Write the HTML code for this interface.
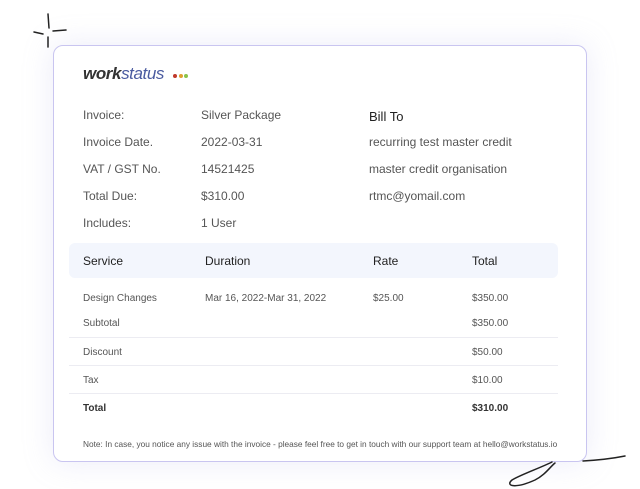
<!DOCTYPE html>
<html><head><style>
body{margin:0;width:640px;height:489px;background:#fff;position:relative;overflow:hidden;font-family:"Liberation Sans",sans-serif;}
.a{position:absolute;white-space:nowrap;}
.card{position:absolute;left:53px;top:45px;width:532px;height:415px;border:1.5px solid #c9c5f0;border-radius:10px;background:#fff;box-shadow:0 0 30px rgba(180,180,230,0.25);}
.l{font-size:12px;color:#555;}
.s{font-size:10px;color:#555;}
.ln{position:absolute;left:69px;width:489px;height:1px;background:#ececf2;}
.d{display:inline-block;width:4px;height:4px;border-radius:2px;margin-right:1.5px;vertical-align:top}
</style></head><body>
<div class="card"></div>
<svg class="a" style="left:0;top:0" width="640" height="489">
<path d="M48 14 L49 28 M34 32 L43 34 M53 31 L66 30 M48 37 L48 47" stroke="#222" stroke-width="1.5" fill="none" stroke-linecap="round"/>
<path d="M552 462 C540 468 520 475 512 480 C505 486 515 489 535 480 C545 475 550 467 555 463 M583 461 C600 460 615 458 625 456" stroke="#222" stroke-width="1.5" fill="none" stroke-linecap="round"/>
</svg>
<div class="a" style="left:83px;top:64px;font-size:17px;letter-spacing:-0.4px;font-style:italic;"><span style="color:#333;font-weight:bold">work</span><span style="color:#4a5ba0">status</span></div>
<div class="a" style="left:173px;top:74px;height:4px;line-height:0"><span class="d" style="background:#c0392b"></span><span class="d" style="background:#e0a030"></span><span class="d" style="background:#8bc34a"></span></div>
<div class="a l" style="left:83px;top:108px">Invoice:</div>
<div class="a l" style="left:83px;top:135px">Invoice Date.</div>
<div class="a l" style="left:83px;top:162px">VAT / GST No.</div>
<div class="a l" style="left:83px;top:189px">Total Due:</div>
<div class="a l" style="left:83px;top:216px">Includes:</div>
<div class="a l" style="left:201px;top:108px">Silver Package</div>
<div class="a l" style="left:201px;top:135px">2022-03-31</div>
<div class="a l" style="left:201px;top:162px">14521425</div>
<div class="a l" style="left:201px;top:189px">$310.00</div>
<div class="a l" style="left:201px;top:216px">1 User</div>
<div class="a" style="left:369px;top:109px;font-size:13px;color:#222">Bill To</div>
<div class="a l" style="left:369px;top:135px">recurring test master credit</div>
<div class="a l" style="left:369px;top:162px">master credit organisation</div>
<div class="a l" style="left:369px;top:189px">rtmc@yomail.com</div>
<div class="a" style="left:69px;top:243px;width:489px;height:35px;background:#f3f6fd;border-radius:6px"></div>
<div class="a" style="left:83px;top:254px;font-size:12px;color:#222">Service</div>
<div class="a" style="left:205px;top:254px;font-size:12px;color:#222">Duration</div>
<div class="a" style="left:373px;top:254px;font-size:12px;color:#222">Rate</div>
<div class="a" style="left:472px;top:254px;font-size:12px;color:#222">Total</div>
<div class="a s" style="left:83px;top:293px">Design Changes</div>
<div class="a s" style="left:205px;top:293px">Mar 16, 2022-Mar 31, 2022</div>
<div class="a s" style="left:373px;top:293px">$25.00</div>
<div class="a s" style="left:472px;top:293px">$350.00</div>
<div class="a s" style="left:83px;top:318px">Subtotal</div>
<div class="a s" style="left:472px;top:318px">$350.00</div>
<div class="ln" style="top:337px"></div>
<div class="a s" style="left:83px;top:347px">Discount</div>
<div class="a s" style="left:472px;top:347px">$50.00</div>
<div class="ln" style="top:365px"></div>
<div class="a s" style="left:83px;top:375px">Tax</div>
<div class="a s" style="left:472px;top:375px">$10.00</div>
<div class="ln" style="top:393px"></div>
<div class="a" style="left:83px;top:403px;font-size:10px;font-weight:bold;color:#333">Total</div>
<div class="a" style="left:472px;top:403px;font-size:10px;font-weight:bold;color:#333">$310.00</div>
<div class="a" style="left:83px;top:439px;font-size:8.3px;color:#555">Note: In case, you notice any issue with the invoice - please feel free to get in touch with our support team at hello@workstatus.io</div>
</body></html>
